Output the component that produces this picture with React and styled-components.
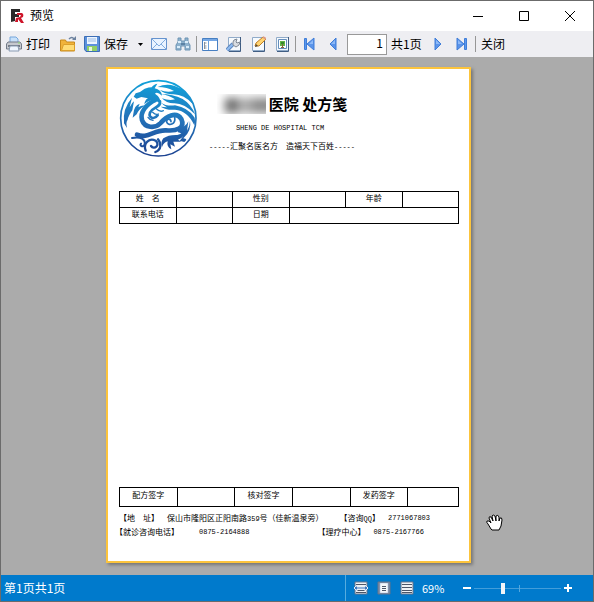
import React from "react";
import styled, { createGlobalStyle } from "styled-components";

const Global = createGlobalStyle`
  *, *::before, *::after { box-sizing: border-box; }
  body { margin: 0; }
  button, input { font: inherit; color: inherit; }
`;

const Window = styled.div`
  display: flex;
  flex-direction: column;
  min-height: 100vh;
  border: 1px solid #6b6b6b;
  background: #ababab;
  color: #000;
  font: 12px/16px "Noto Sans CJK SC", sans-serif;
`;

const TitleBar = styled.header`
  display: flex;
  align-items: center;
  height: 30px;
  padding-left: 8px;
  gap: 5px;
  background: #fff;
`;

const WindowTitle = styled.h1`
  flex: 1;
  margin: 0;
  padding-bottom: 2px;
  font-size: 12px;
  font-weight: 400;
`;

const CaptionButton = styled.button`
  display: grid;
  place-items: center;
  width: 46px;
  height: 29px;
  margin-left: -5px;
  padding: 0;
  border: 0;
  background: none;
`;

const Toolbar = styled.nav`
  display: flex;
  align-items: center;
  height: 26px;
  padding-left: 1px;
  background: #eeeef2;
`;

const ToolButton = styled.button`
  display: flex;
  align-items: center;
  justify-content: center;
  gap: 4px;
  height: 24px;
  padding: 0 ${(p) => (p.$labelled ? 6 : 4)}px 0 4px;
  border: 0;
  background: none;
  line-height: 16px;
  white-space: nowrap;
`;

const Divider = styled.span`
  width: 1px;
  height: 16px;
  margin: 0 1px;
  background: #969696;
`;

const PageInput = styled.input`
  width: 40px;
  height: 21px;
  margin: 0 4px 0 2px;
  padding: 0 3px 3px;
  border: 1px solid #999;
  background: #fff;
  text-align: right;
`;

const PageTotal = styled.span`
  width: 31px;
  margin-right: 4px;
  white-space: nowrap;
`;

const Viewport = styled.main`
  position: relative;
  flex: 1;
  display: flex;
  justify-content: center;
  padding: 10px 17px 12px 0;
`;

const Paper = styled.article`
  display: flex;
  flex-direction: column;
  width: 100%;
  max-width: 365px;
  padding: 10px 10px 22px 11px;
  border: 2px solid #fcc43c;
  background: #fff;
  box-shadow: 2px 2px 3px #777;
  font: 8px/16px "Liberation Mono", "Noto Sans CJK SC", monospace;
`;

const Letterhead = styled.header`
  display: flex;
  height: 112px;
`;

const Heading = styled.div`
  display: flex;
  flex-direction: column;
  align-items: center;
  width: 168px;
  padding-top: 14px;
`;

const Hospital = styled.h2`
  display: flex;
  align-items: center;
  gap: 3px;
  margin: 0;
  font: 700 15px/22px "Noto Sans CJK SC", sans-serif;
  white-space: nowrap;
`;

const Redacted = styled.span`
  width: 49px;
  height: 20px;
  overflow: hidden;
  &::before {
    content: "";
    display: block;
    width: 50px;
    height: 15px;
    margin: 4px 0 0 8px;
    background: linear-gradient(90deg, #666 0 10px, #aaa 14px 24px, #888 30px);
    filter: blur(5px);
  }
`;

const Latin = styled.span`
  font-size: 7px;
`;

const EnglishName = styled.p`
  margin: 5px 4px 0 0;
  font-size: 7px;
  line-height: 16px;
  white-space: nowrap;
`;

const Slogan = styled.p`
  margin: 3px 0 0;
  white-space: pre;
`;

const Form = styled.table`
  width: 100%;
  table-layout: fixed;
  border-collapse: collapse;
  td, th {
    height: ${(p) => p.$row}px;
    padding: 0 0 2px;
    border: 1px solid #000;
    font-weight: 400;
    line-height: 12px;
    text-align: center;
    white-space: pre;
  }
`;

const Space = styled.div`
  flex: 1;
`;

const Contacts = styled.footer`
  display: grid;
  padding-top: 5px;
  line-height: 13px;
`;

const ContactRow = styled.div`
  display: flex;
  gap: ${(p) => p.$gap}px;
  margin-left: ${(p) => (p.$outdent ? -4 : 0)}px;
  white-space: pre;
`;

const ContactItem = styled.span`
  display: flex;
  gap: ${(p) => p.$gap}px;
`;

const HandCursor = styled.svg`
  position: absolute;
  left: 485px;
  bottom: 44px;
`;

const StatusBar = styled.footer`
  display: flex;
  align-items: center;
  height: 26px;
  padding: 0 21px 0 3px;
  background: #007acc;
  color: #fff;
`;

const PageStatus = styled.span`
  flex: 1;
`;

const StatusTools = styled.div`
  display: flex;
  align-items: center;
  gap: 7px;
  height: 100%;
  padding-left: 7px;
  border-left: 1px solid #56acdf;
`;

const StatusButton = styled.button`
  display: grid;
  place-items: center;
  width: ${(p) => p.$size || 16}px;
  height: 16px;
  padding: 0;
  border: 0;
  background: none;
`;

const Percent = styled.output`
  width: 34px;
  font-size: 11px;
`;

const ZoomSlider = styled.input`
  width: 87px;
  height: 16px;
  margin: 0 -4px;
  appearance: none;
  background:
    linear-gradient(#55a7de, #55a7de) 45px 50% / 1px 7px no-repeat,
    linear-gradient(#429dda, #429dda) 0 50% / 100% 1px no-repeat;
  &::-webkit-slider-thumb {
    appearance: none;
    width: 4px;
    height: 11px;
    background: #f2f5f8;
  }
`;

function Icon({ children, size = 16 }) {
  return (
    <svg width={size} height={size} viewBox="0 0 16 16" fill="none" aria-hidden="true">
      {children}
    </svg>
  );
}

const BrandIcon = () => (
  <Icon>
    <path d="M2 1h9v3H6v2h4v3H6v4l-4 1z" fill="#292929" />
    <path d="M8 5h5q2 1 1 4l-2 1 3 5h-3l-3-4v3H6l1-4 4-1 1-2H8z" fill="#ce1429" />
  </Icon>
);

const PrintIcon = () => (
  <Icon>
    <path d="M4 7V1h6l2 2v4" fill="#c8e1fa" stroke="#77a7dc" />
    <path d="M2 6h12l1.500 2v5H.5V8z" fill="#c6c9cf" stroke="#737b88" />
    <path d="M2 9h12v2H2z" fill="#737983" />
    <path d="M4 10h8l1 5H3z" fill="#eff6ff" stroke="#8a9bb1" />
    <path d="M12 7h2" stroke="#8de072" />
  </Icon>
);

const OpenIcon = () => (
  <Icon>
    <path d="M.5 15V4h5l1 2h8v9z" fill="#f1b33b" stroke="#c88a1d" />
    <path d="M1.500 14.500l2-6h11v6z" fill="#ffdc76" stroke="#db9f2c" />
    <path d="M9 3q3-3 5 0" stroke="#6c829f" strokeWidth="1.500" />
    <path d="M12 4h4V0" fill="#6c829f" />
  </Icon>
);

const SaveIcon = () => (
  <Icon>
    <path d="M.5.5h15v15H2l-1.500-2z" fill="#5c91dc" stroke="#3c6eb5" />
    <path d="M3 1h10v7H3z" fill="#edf5ff" />
    <path d="M4 3h8M4 5h8" stroke="#9bbbe5" />
    <path d="M3 10h10v5H3z" fill="#91cf66" />
    <path d="M5 11h3v4H5z" fill="#e9f8dc" />
  </Icon>
);

const MailIcon = () => (
  <Icon>
    <path d="M.5 2.500h15v11H.5z" fill="#e9f3ff" stroke="#6693ce" />
    <path d="M1 3l7 7 7-7M1 13l5-5m9 5l-5-5" stroke="#82addf" />
  </Icon>
);

const FindIcon = () => (
  <Icon>
    <path d="M3 2h3v3h4V2h3v4l2 3v5h-5v-4H6v4H1V9l2-3z" fill="#8db1cd" stroke="#6f95b5" />
    <path d="M3 6h3m4 0h3M2 11h3m6 0h3" stroke="#d9ecfa" strokeWidth="2" />
    <path d="M6 7h4v2H6z" fill="#5b82a5" />
  </Icon>
);

const OutlineIcon = () => (
  <Icon>
    <path d="M.5 2.500h15v12H.5z" fill="#fff" stroke="#477fc2" />
    <path d="M1 3h14v2H1z" fill="#75a7e5" />
    <path d="M6.500 5v9" stroke="#6b9eda" />
    <path d="M2.500 6v7m0-6h2m-2 3h2m-2 2h2" stroke="#87919e" />
  </Icon>
);

const Sheet = () => (
  <>
    <path d="M2.500 1.500h12v13h-12z" fill="#f6fafe" stroke="#91abc9" />
    <path d="M14.500 1v14.500H3" stroke="#405d83" />
  </>
);

const SetupIcon = () => (
  <Icon>
    <Sheet />
    <path d="M1 14l6-6" stroke="#5d87c0" strokeWidth="4" />
    <path d="M1 14l6-6" stroke="#91bcf0" strokeWidth="2" />
    <path d="M7 9V6l1-2 3-1-1 3 1 1 3-1-1 3-3 2z" fill="#d9dde2" stroke="#808996" />
  </Icon>
);

const EditIcon = () => (
  <Icon>
    <Sheet />
    <path d="M5 10l1-3 7-6 3 2-7 7z" fill="#ffd471" stroke="#bf7e26" />
    <path d="M13 1l3 2" stroke="#df9c86" strokeWidth="2" />
    <path d="M5 11l1-3 2 2z" fill="#514534" />
  </Icon>
);

const WatermarkIcon = () => (
  <Icon>
    <Sheet />
    <path d="M4.500 3.500h8v9h-8z" fill="#fff" stroke="#668fbd" />
    <path d="M6 5h5v5H6z" fill="#62b345" />
    <path d="M7 6h3v2H7z" fill="#38892d" />
    <path d="M8.500 8v4M7 11.500h3" stroke="#87643c" />
  </Icon>
);

function ArrowIcon({ back, end }) {
  return (
    <Icon>
      <g transform={back ? "matrix(-1 0 0 1 16 0)" : undefined}>
        <path d={end ? "M3 2l7 6-7 6z" : "M5 2l6 6-6 6z"} fill="#5b94ea" stroke="#3f7dd8" />
        <path d={end ? "M4 4l4 4H4z" : "M6 4l4 4H6z"} fill="#8db9f7" />
        {end && <path d="M10.500 2.500h2v11h-2z" fill="#5b98ed" stroke="#3f7dd8" />}
      </g>
    </Icon>
  );
}

const MinimizeIcon = () => (
  <svg width="12" height="12" aria-hidden="true"><path d="M1 6.500h10" stroke="#000" /></svg>
);
const MaximizeIcon = () => (
  <svg width="12" height="12" aria-hidden="true"><path d="M1.500 1.500h9v9h-9z" fill="none" stroke="#000" /></svg>
);
const CloseIcon = () => (
  <svg width="12" height="12" aria-hidden="true"><path d="M1 1l10 10M11 1L1 11" stroke="#000" /></svg>
);
const CaretIcon = () => (
  <svg width="5" height="3" aria-hidden="true"><path d="M0 0h5L2.500 3z" /></svg>
);

function DragonLogo() {
  return (
    <svg width="79" height="79" viewBox="3 3 237 237" fill="url(#ink)" role="img" aria-label="院徽">
      <defs>
        <linearGradient id="ink" gradientUnits="userSpaceOnUse" x1="130" y1="5" x2="110" y2="237">
          <stop stopColor="#10a4db" />
          <stop offset=".5" stopColor="#2374bb" />
          <stop offset="1" stopColor="#1b3f8e" />
        </linearGradient>
      </defs>
      <g fill="none" stroke="url(#ink)" strokeLinecap="round">
        <circle cx="121" cy="121" r="113" strokeWidth="5" />
        <path d="M112 66C86 78 65 102 72 126C80 151 112 152 128 135C145 115 174 99 190 123C203 151 174 160 144 157C108 155 88 184 57 170" strokeWidth="14" />
        <path d="M126 70C130 88 105 86 96 104C90 120 109 126 119 112" strokeWidth="8" />
        <path d="M90 118Q95 126 105 127M113 91Q126 104 136 98M104 103Q113 112 121 108" strokeWidth="4" />
        <path d="M170 118C174 139 151 146 146 132C145 121 158 121 159 131" strokeWidth="5" />
        <path d="M42 180C68 174 83 184 80 199C75 211 63 202 69 197" strokeWidth="6" />
        <path d="M83 218C74 195 95 178 113 188C128 202 108 217 99 204" strokeWidth="7" />
        <path d="M112 222C131 216 130 196 120 184" strokeWidth="7" />
      </g>
      <path d="M47 56L53 46Q69 42 80 32Q93 28 101 28Q105 20 118 17L110 31Q130 35 132 53Q117 39 111 47Q130 59 128 79Q115 66 105 66Q91 67 79 79Q81 65 90 61L70 57L56 62Z" />
      <path d="M119 27Q153 10 193 34Q216 51 225 79Q196 46 160 49Q138 47 126 36Q145 44 168 39Q148 27 119 27Z" />
      <path d="M128 48Q164 48 194 63Q220 79 231 109Q200 76 169 76Q146 77 132 61Q154 69 171 64Q154 52 128 48Z" />
      <path d="M130 74Q144 85 171 82Q211 89 230 119Q233 131 229 142Q209 98 171 95Q144 97 128 86L147 88Q135 81 130 74Z" />
      <path d="M18 136Q13 91 42 59L35 88Q44 72 48 70L43 97Q31 114 29 125Q23 132 27 150Z" />
      <path d="M46 107Q49 81 65 77L61 88Q70 82 79 83Q61 95 56 109L44 119Z" />
      <path d="M180 149Q203 149 211 130L207 158Q216 143 216 128Q222 157 196 181Q212 183 199 192L185 188Q205 169 180 163Z" />
      <path d="M136 181Q151 170 178 171Q198 165 198 153Q203 178 180 185L190 191L166 191L171 206L157 199L160 214Q145 207 149 190Q137 193 132 207Q127 192 136 181Z" />
    </svg>
  );
}

function StatusIcon({ kind }) {
  return (
    <Icon>
      <path d="M2 2h12v12H2z" fill={kind === "page" ? "#8292ad" : "#eef1f5"} stroke="#65728a" />
      {kind === "page" && <path d="M4.500 3.500h7v9h-7z" fill="#f5f7fa" stroke="#dce6f5" />}
      <path
        d={kind === "page" ? "M6 6.500h4M6 8.500h4M6 10.500h4" : "M3 4.500h10M3 7.500h10M3 10.500h10M3 12.500h10"}
        stroke="#4c5668"
      />
      {kind === "width" && <path d="M1 8l3-3v2h8V5l3 3-3 3V9H4v2z" fill="#3f76bd" stroke="#e4ecf5" />}
    </Icon>
  );
}

const Tool = ({ label, children }) => (
  <ToolButton aria-label={label}>{children}</ToolButton>
);

export default function App() {
  return (
    <Window>
      <Global />
      <TitleBar>
        <BrandIcon />
        <WindowTitle>预览</WindowTitle>
        <CaptionButton aria-label="最小化"><MinimizeIcon /></CaptionButton>
        <CaptionButton aria-label="最大化"><MaximizeIcon /></CaptionButton>
        <CaptionButton aria-label="关闭窗口"><CloseIcon /></CaptionButton>
      </TitleBar>

      <Toolbar aria-label="工具栏">
        <ToolButton $labelled><PrintIcon />打印</ToolButton>
        <Tool label="打开"><OpenIcon /></Tool>
        <ToolButton $labelled><SaveIcon />保存</ToolButton>
        <Tool label="保存选项"><CaretIcon /></Tool>
        <Tool label="邮件"><MailIcon /></Tool>
        <Tool label="查找"><FindIcon /></Tool>
        <Divider />
        <Tool label="大纲"><OutlineIcon /></Tool>
        <Tool label="页面设置"><SetupIcon /></Tool>
        <Tool label="编辑"><EditIcon /></Tool>
        <Tool label="水印"><WatermarkIcon /></Tool>
        <Divider />
        <Tool label="首页"><ArrowIcon back end /></Tool>
        <Tool label="上一页"><ArrowIcon back /></Tool>
        <PageInput aria-label="页码" defaultValue="1" />
        <PageTotal>共1页</PageTotal>
        <Tool label="下一页"><ArrowIcon /></Tool>
        <Tool label="末页"><ArrowIcon end /></Tool>
        <Divider />
        <ToolButton $labelled>关闭</ToolButton>
      </Toolbar>

      <Viewport>
        <Paper>
          <Letterhead>
            <DragonLogo />
            <Heading>
              <Hospital><Redacted />医院 处方笺</Hospital>
              <EnglishName>SHENG DE HOSPITAL TCM</EnglishName>
              <Slogan><Latin>-----</Latin>汇聚名医名方　造福天下百姓<Latin>-----</Latin></Slogan>
            </Heading>
          </Letterhead>

          <Form $row={16}>
            <tbody>
              <tr>
                <th scope="row">姓　名</th><td />
                <th scope="row">性别</th><td />
                <th scope="row">年龄</th><td />
              </tr>
              <tr>
                <th scope="row">联系电话</th><td />
                <th scope="row">日期</th><td colSpan={3} />
              </tr>
            </tbody>
          </Form>

          <Space />

          <Form $row={19}>
            <colgroup>
              <col width="17%" /><col width="17%" /><col width="17%" />
              <col width="17%" /><col width="17%" /><col width="15%" />
            </colgroup>
            <tbody>
              <tr>
                <th scope="row">配方签字</th><td />
                <th scope="row">核对签字</th><td />
                <th scope="row">发药签字</th><td />
              </tr>
            </tbody>
          </Form>

          <Contacts>
            <ContactRow $gap={16}>
              <ContactItem $gap={8}>
                <span>【地　址】</span>
                <span>保山市隆阳区正阳南路<Latin>359</Latin>号（佳新温泉旁）</span>
              </ContactItem>
              <ContactItem $gap={8}>
                <span>【咨询<Latin>QQ</Latin>】</span>
                <Latin>2771067803</Latin>
              </ContactItem>
            </ContactRow>
            <ContactRow $gap={68} $outdent>
              <ContactItem $gap={20}>
                <span>【就诊咨询电话】</span>
                <Latin>0875-2164888</Latin>
              </ContactItem>
              <ContactItem $gap={8}>
                <span>【理疗中心】</span>
                <Latin>0875-2167766</Latin>
              </ContactItem>
            </ContactRow>
          </Contacts>
        </Paper>

        <HandCursor width="17" height="18" viewBox="0 0 17 18" aria-hidden="true">
          <path
            d="M5 16L2 11Q0 9 1 8Q3 7 5 10L3 5Q3 3 5 4L7 8L6 3Q7 1 9 3L10 8L10 3Q12 1 13 4V8L14 5Q16 4 16 7L15 13L13 17H6Z"
            fill="#fff"
            stroke="#000"
          />
        </HandCursor>
      </Viewport>

      <StatusBar>
        <PageStatus>第1页共1页</PageStatus>
        <StatusTools>
          <StatusButton aria-label="适合宽度"><StatusIcon kind="width" /></StatusButton>
          <StatusButton aria-label="整页"><StatusIcon kind="page" /></StatusButton>
          <StatusButton aria-label="实际大小"><StatusIcon kind="lines" /></StatusButton>
          <Percent>69%</Percent>
          <StatusButton aria-label="缩小" $size={8}>
            <svg width="8" height="8" aria-hidden="true"><path d="M0 4h8" stroke="#fff" strokeWidth="2" /></svg>
          </StatusButton>
          <ZoomSlider type="range" aria-label="缩放" min="0" max="100" defaultValue="32" />
          <StatusButton aria-label="放大" $size={8}>
            <svg width="8" height="8" aria-hidden="true"><path d="M0 4h8M4 0v8" stroke="#fff" strokeWidth="2" /></svg>
          </StatusButton>
        </StatusTools>
      </StatusBar>
    </Window>
  );
}
